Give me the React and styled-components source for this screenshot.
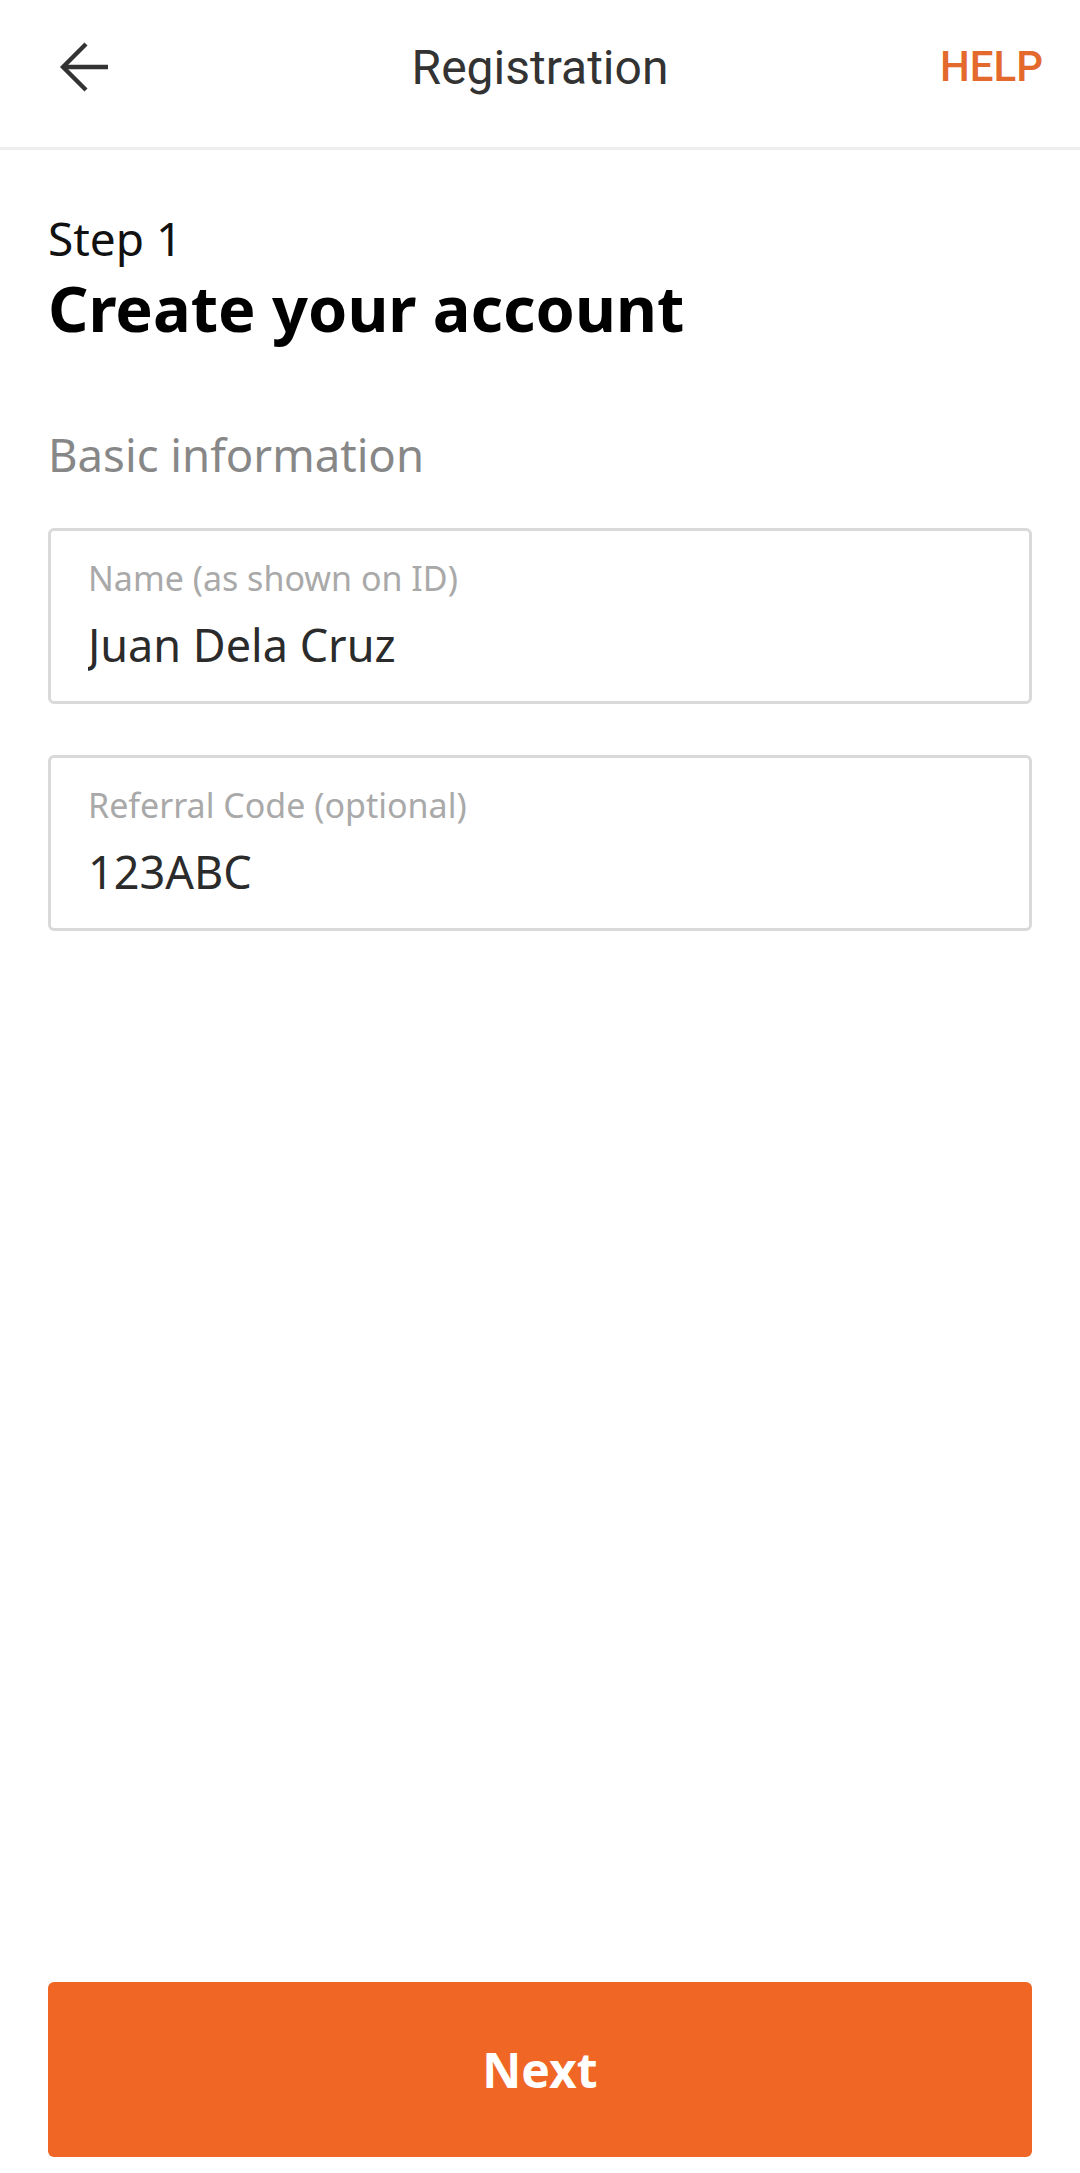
import React from "react";
import styled, { createGlobalStyle } from "styled-components";

const GlobalStyle = createGlobalStyle`
  * {
    box-sizing: border-box;
  }
  html,
  body {
    margin: 0;
    padding: 0;
    background: #ffffff;
  }
  body {
    font-family: "Noto Sans", "Open Sans", sans-serif;
    -webkit-font-smoothing: antialiased;
  }
`;

const Screen = styled.div`
  min-height: 100vh;
  display: flex;
  flex-direction: column;
  background: #fff;
`;

const TopBar = styled.header`
  display: grid;
  grid-template-columns: 1fr auto 1fr;
  align-items: center;
  height: 150px;
  padding-bottom: 13px;
  border-bottom: 3px solid #eeeeee;
`;

const BackButton = styled.button`
  justify-self: start;
  display: flex;
  align-items: center;
  background: none;
  border: 0;
  padding: 0 0 0 58px;
  cursor: pointer;
`;

const Title = styled.h1`
  margin: 0;
  font-family: Roboto, "Noto Sans", sans-serif;
  font-weight: 400;
  font-size: 48px;
  line-height: 56px;
  color: #333333;
  transform: translateY(1px);
`;

const HelpLink = styled.a`
  justify-self: end;
  padding-right: 37px;
  font-family: Roboto, "Noto Sans", sans-serif;
  font-weight: 500;
  font-size: 42px;
  line-height: 50px;
  color: #e4692d;
  text-decoration: none;
  cursor: pointer;
`;

const Content = styled.main`
  display: flex;
  flex-direction: column;
  padding: 58px 48px 0;
  flex: 1;
`;

const StepLabel = styled.div`
  font-size: 46px;
  line-height: 60px;
  color: #111111;
`;

const Heading = styled.h2`
  margin: 2px 0 0;
  font-size: 63px;
  line-height: 76px;
  font-weight: 700;
  color: #000000;
`;

const SectionTitle = styled.h3`
  margin: 78px 0 44px;
  font-size: 45.5px;
  line-height: 60px;
  font-weight: 400;
  color: #878787;
`;

const FieldList = styled.div`
  display: flex;
  flex-direction: column;
  gap: 51px;
`;

const Field = styled.label`
  display: flex;
  flex-direction: column;
  gap: 17px;
  padding: 25px 37px 28px;
  border: 3px solid #d9d9d9;
  border-radius: 6px;
`;

const FieldLabel = styled.span`
  font-size: 34px;
  line-height: 44px;
  color: #a9a9a9;
`;

const FieldValue = styled.input`
  display: block;
  width: 100%;
  margin: 0;
  padding: 0;
  border: 0;
  outline: none;
  background: transparent;
  font-family: "Noto Sans", "Open Sans", sans-serif;
  font-size: 45px;
  line-height: 56px;
  height: 56px;
  color: #2b2b2b;
`;

const Footer = styled.footer`
  padding: 0 48px 16px;
`;

const PrimaryButton = styled.button`
  display: flex;
  align-items: center;
  justify-content: center;
  width: 100%;
  height: 175px;
  border: 0;
  border-radius: 6px;
  background: #ef6625;
  color: #ffffff;
  font-family: "Noto Sans", "Open Sans", sans-serif;
  font-weight: 700;
  font-size: 48px;
  cursor: pointer;
`;

const BackArrow = () => (
  <svg width="52" height="52" viewBox="0 0 52 52" fill="none">
    <polyline
      points="28,3 5,26 28,49"
      stroke="#333333"
      strokeWidth="4.3"
      strokeLinejoin="miter"
    />
    <line x1="5" y1="26" x2="50" y2="26" stroke="#333333" strokeWidth="4.3" />
  </svg>
);

const fields = [
  { label: "Name (as shown on ID)", value: "Juan Dela Cruz" },
  { label: "Referral Code (optional)", value: "123ABC" },
];

export default function App() {
  return (
    <>
      <GlobalStyle />
      <Screen>
        <TopBar>
          <BackButton aria-label="Back">
            <BackArrow />
          </BackButton>
          <Title>Registration</Title>
          <HelpLink>HELP</HelpLink>
        </TopBar>

        <Content>
          <StepLabel>Step 1</StepLabel>
          <Heading>Create your account</Heading>
          <SectionTitle>Basic information</SectionTitle>
          <FieldList>
            {fields.map((f) => (
              <Field key={f.label}>
                <FieldLabel>{f.label}</FieldLabel>
                <FieldValue defaultValue={f.value} />
              </Field>
            ))}
          </FieldList>
        </Content>

        <Footer>
          <PrimaryButton>Next</PrimaryButton>
        </Footer>
      </Screen>
    </>
  );
}
